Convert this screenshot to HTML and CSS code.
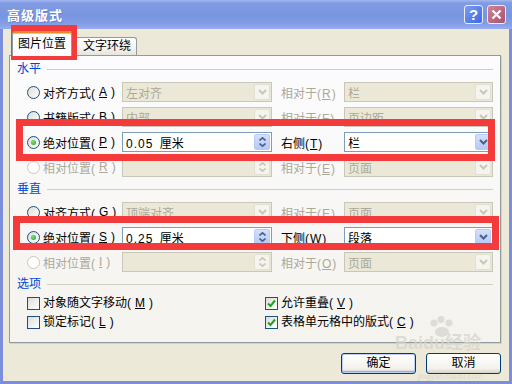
FILE: index.html
```html
<!DOCTYPE html>
<html lang="zh-CN">
<head>
	<meta charset="UTF-8">
	<title>高级版式</title>
	<link rel="stylesheet" href="styles.css">
</head>
<body>
<div class="window">
	<div class="titlebar">
		<span class="title">高级版式</span>
		<span class="tb-btn help">?</span>
		<span class="tb-btn close"><svg width="13" height="13" viewBox="0 0 13 13"><path d="M2.5 2.5L10.5 10.5M10.5 2.5L2.5 10.5" stroke="#fff" stroke-width="2.2"/></svg></span>
	</div>
	<div class="client">
		<div class="tabs">
			<div class="tab current">图片位置</div>
			<div class="tab">文字环绕</div>
		</div>
		<div class="panel">
			<div class="group-head">水平</div>
			<div class="rows">
				<div class="opt"><span class="radio"></span>对齐方式(<u>A</u>)</div>
				<div class="combo off"><span class="val">左对齐</span><span class="drop"><svg width="9" height="6" viewBox="0 0 9 6"><path d="M1 1L4.5 4.5L8 1" fill="none" stroke="currentColor" stroke-width="2"/></svg></span></div>
				<div class="rel off">相对于(<u>R</u>)</div>
				<div class="combo off"><span class="val">栏</span><span class="drop"><svg width="9" height="6" viewBox="0 0 9 6"><path d="M1 1L4.5 4.5L8 1" fill="none" stroke="currentColor" stroke-width="2"/></svg></span></div>

				<div class="opt"><span class="radio"></span>书籍版式(<u>B</u>)</div>
				<div class="combo off"><span class="val">内部</span><span class="drop"><svg width="9" height="6" viewBox="0 0 9 6"><path d="M1 1L4.5 4.5L8 1" fill="none" stroke="currentColor" stroke-width="2"/></svg></span></div>
				<div class="rel off">相对于(<u>F</u>)</div>
				<div class="combo off"><span class="val">页边距</span><span class="drop"><svg width="9" height="6" viewBox="0 0 9 6"><path d="M1 1L4.5 4.5L8 1" fill="none" stroke="currentColor" stroke-width="2"/></svg></span></div>

				<div class="opt"><span class="radio on"></span>绝对位置(<u>P</u>)</div>
				<div class="combo"><span class="val"><span class="num">0.05</span> 厘米</span><span class="spin"><svg width="7" height="4" viewBox="0 0 7 4"><path d="M0.5 3.5L3.5 0.8L6.5 3.5" fill="none" stroke="currentColor" stroke-width="1.6"/></svg><svg width="7" height="4" viewBox="0 0 7 4"><path d="M0.5 0.5L3.5 3.2L6.5 0.5" fill="none" stroke="currentColor" stroke-width="1.6"/></svg></span></div>
				<div class="rel">右侧(<u>T</u>)</div>
				<div class="combo"><span class="val">栏</span><span class="drop"><svg width="9" height="6" viewBox="0 0 9 6"><path d="M1 1L4.5 4.5L8 1" fill="none" stroke="currentColor" stroke-width="2"/></svg></span></div>

				<div class="opt off"><span class="radio"></span>相对位置(<u>R</u>)</div>
				<div class="combo off"><span class="val"></span><span class="spin"><svg width="7" height="4" viewBox="0 0 7 4"><path d="M0.5 3.5L3.5 0.8L6.5 3.5" fill="none" stroke="currentColor" stroke-width="1.6"/></svg><svg width="7" height="4" viewBox="0 0 7 4"><path d="M0.5 0.5L3.5 3.2L6.5 0.5" fill="none" stroke="currentColor" stroke-width="1.6"/></svg></span></div>
				<div class="rel off">相对于(<u>E</u>)</div>
				<div class="combo off"><span class="val">页面</span><span class="drop"><svg width="9" height="6" viewBox="0 0 9 6"><path d="M1 1L4.5 4.5L8 1" fill="none" stroke="currentColor" stroke-width="2"/></svg></span></div>
			</div>

			<div class="group-head">垂直</div>
			<div class="rows">
				<div class="opt"><span class="radio"></span>对齐方式(<u>G</u>)</div>
				<div class="combo off"><span class="val">顶端对齐</span><span class="drop"><svg width="9" height="6" viewBox="0 0 9 6"><path d="M1 1L4.5 4.5L8 1" fill="none" stroke="currentColor" stroke-width="2"/></svg></span></div>
				<div class="rel off">相对于(<u>E</u>)</div>
				<div class="combo off"><span class="val">页面</span><span class="drop"><svg width="9" height="6" viewBox="0 0 9 6"><path d="M1 1L4.5 4.5L8 1" fill="none" stroke="currentColor" stroke-width="2"/></svg></span></div>

				<div class="opt"><span class="radio on"></span>绝对位置(<u>S</u>)</div>
				<div class="combo"><span class="val"><span class="num">0.25</span> 厘米</span><span class="spin"><svg width="7" height="4" viewBox="0 0 7 4"><path d="M0.5 3.5L3.5 0.8L6.5 3.5" fill="none" stroke="currentColor" stroke-width="1.6"/></svg><svg width="7" height="4" viewBox="0 0 7 4"><path d="M0.5 0.5L3.5 3.2L6.5 0.5" fill="none" stroke="currentColor" stroke-width="1.6"/></svg></span></div>
				<div class="rel">下侧(<u>W</u>)</div>
				<div class="combo"><span class="val">段落</span><span class="drop"><svg width="9" height="6" viewBox="0 0 9 6"><path d="M1 1L4.5 4.5L8 1" fill="none" stroke="currentColor" stroke-width="2"/></svg></span></div>

				<div class="opt off"><span class="radio"></span>相对位置(<u>I</u>)</div>
				<div class="combo off"><span class="val"></span><span class="spin"><svg width="7" height="4" viewBox="0 0 7 4"><path d="M0.5 3.5L3.5 0.8L6.5 3.5" fill="none" stroke="currentColor" stroke-width="1.6"/></svg><svg width="7" height="4" viewBox="0 0 7 4"><path d="M0.5 0.5L3.5 3.2L6.5 0.5" fill="none" stroke="currentColor" stroke-width="1.6"/></svg></span></div>
				<div class="rel off">相对于(<u>O</u>)</div>
				<div class="combo off"><span class="val">页面</span><span class="drop"><svg width="9" height="6" viewBox="0 0 9 6"><path d="M1 1L4.5 4.5L8 1" fill="none" stroke="currentColor" stroke-width="2"/></svg></span></div>
			</div>

			<div class="group-head">选项</div>
			<div class="checks">
				<div class="check"><span class="box"></span>对象随文字移动(<u>M</u>)</div>
				<div class="check"><span class="box on"><svg width="9" height="9" viewBox="0 0 9 9"><path d="M1 4.5L3.5 7L8 1.5" fill="none" stroke="#21a121" stroke-width="2"/></svg></span>允许重叠(<u>V</u>)</div>
				<div class="check"><span class="box"></span>锁定标记(<u>L</u>)</div>
				<div class="check"><span class="box on"><svg width="9" height="9" viewBox="0 0 9 9"><path d="M1 4.5L3.5 7L8 1.5" fill="none" stroke="#21a121" stroke-width="2"/></svg></span>表格单元格中的版式(<u>C</u>)</div>
			</div>
		</div>
		<div class="actions">
			<div class="btn default">确定</div>
			<div class="btn">取消</div>
		</div>
	</div>

	<div class="watermark">
		<svg class="paw" width="30" height="22" viewBox="0 0 30 22"><circle cx="7" cy="7" r="3.5"/><circle cx="14" cy="3.5" r="3.5"/><circle cx="22" cy="7" r="3.5"/><ellipse cx="15" cy="16" rx="7" ry="5"/></svg>
		<div class="wm-big">Baidu经验</div>
	</div>
	<div class="wm-small">jingyan.baidu.com</div>

	<div class="mark mark-tab"></div>
	<div class="mark mark-h"></div>
	<div class="mark mark-v"></div>
</div>
</body>
</html>
```
FILE: styles.css
```css
body {
	margin: 0;
	font-size: 12px;
	font-family: "Liberation Sans", "Noto Sans CJK SC", sans-serif;
	color: #000;
}

.window {
	position: relative;
	width: 512px;
	height: 384px;
	background: #7b8ddb;
	display: flex;
	flex-direction: column;
	overflow: hidden;
}

/* title bar */
.titlebar {
	height: 29px;
	display: flex;
	align-items: center;
	padding: 0 6px 0 7px;
	background: linear-gradient(#a3b6f1 0, #819be3 3px, #7a95df 55%, #829ce5 80%, #95acee 100%);
}

.title {
	flex: 1;
	color: #fff;
	font-size: 13px;
	font-weight: bold;
	letter-spacing: 1px;
	text-shadow: 1px 1px 0 #6b80cc;
}

.tb-btn {
	width: 19px;
	height: 19px;
	box-sizing: border-box;
	border: 1px solid #e8eefc;
	border-radius: 3px;
	display: flex;
	align-items: center;
	justify-content: center;
	color: #fff;
	font: bold 15px "Liberation Sans", sans-serif;
}

.help {
	margin-right: 4px;
	background: linear-gradient(135deg, #7c9cf2, #3e68e2);
}

.close {
	background: linear-gradient(135deg, #cf8598, #a5546d);
}

/* client area */
.client {
	flex: 1;
	margin: 0 3px 3px;
	padding: 2px 8px 0 6px;
	background: #ece9d8;
}

.tabs {
	display: flex;
	align-items: flex-end;
	padding-left: 3px;
}

.tab {
	position: relative;
	height: 18px;
	line-height: 17px;
	box-sizing: border-box;
	padding: 0 5px 0 10px;
	border: 1px solid #919b9c;
	border-bottom: 0;
	border-radius: 3px 3px 0 0;
	background: linear-gradient(#fff, #f4f3ef 60%, #e6e4dc);
}

.tab.current {
	z-index: 1;
	height: 25px;
	line-height: 22px;
	margin-bottom: -1px;
	padding: 0 5px;
	border-top: 2px solid #e68b2c;
	background: #fcfcfe;
	box-shadow: inset 0 1px 0 #ffc73c;
}

.panel {
	height: 288px;
	box-sizing: border-box;
	padding-top: 6px;
	border: 1px solid #919b9c;
	background: linear-gradient(#fcfcfe, #f4f3ee);
	box-shadow: 1px 1px 0 #d5d2c4;
}

.group-head {
	display: flex;
	align-items: center;
	height: 14px;
	line-height: 14px;
	margin: 5px 7px 0 0;
	padding-left: 7px;
	color: #0046d5;
}

.group-head:first-child {
	margin-top: 0;
}

.group-head:after {
	content: "";
	flex: 1;
	height: 1px;
	margin-left: 6px;
	background: #d0d0bf;
}

.rows {
	display: grid;
	grid-template-columns: 95px 150px 72px 149px;
	grid-auto-rows: 20px;
	row-gap: 5px;
	align-items: center;
	margin-top: 6px;
	padding-left: 17px;
}

.opt {
	display: flex;
	align-items: center;
	gap: 3px;
	white-space: nowrap;
}

.opt u,
.rel u,
.check u {
	margin: 0 1px;
}

.radio {
	position: relative;
	flex: none;
	width: 13px;
	height: 13px;
	box-sizing: border-box;
	border: 1px solid #1c5180;
	border-radius: 50%;
	background: linear-gradient(135deg, #dcdcd7, #fff);
}

.radio.on:after {
	content: "";
	position: absolute;
	left: 3px;
	top: 3px;
	width: 5px;
	height: 5px;
	border-radius: 50%;
	background: radial-gradient(circle at 40% 35%, #7ee07a, #21a121);
}

.off {
	color: #aca899;
}

.opt.off .radio {
	border-color: #cac8bb;
	background: #fff;
}

.rel {
	padding-left: 9px;
	white-space: nowrap;
}

.combo {
	height: 20px;
	box-sizing: border-box;
	display: flex;
	align-items: center;
	padding-left: 3px;
	border: 1px solid #7f9db9;
	background: #fff;
}

.combo .val {
	flex: 1;
	white-space: nowrap;
}

.num {
	letter-spacing: 1px;
	margin-right: 3px;
}

.drop,
.spin {
	width: 16px;
	height: 16px;
	margin-right: 1px;
	box-sizing: border-box;
	display: flex;
	align-items: center;
	justify-content: center;
	border: 1px solid #b8cbf8;
	border-radius: 2px;
	color: #4d6185;
	background: linear-gradient(#d3e0fd, #b4c8f8);
}

.spin {
	flex-direction: column;
	gap: 2px;
}

.combo.off {
	border-color: #c9c7ba;
	background: #ebe8d7;
}

.combo.off .drop,
.combo.off .spin {
	border-color: #e2e0d5;
	color: #c9c7ba;
	background: #f5f4ef;
}

/* options */
.checks {
	display: grid;
	grid-template-columns: 238px auto;
	grid-auto-rows: 13px;
	row-gap: 6px;
	margin-top: 6px;
	padding-left: 17px;
	line-height: 13px;
}

.check {
	display: flex;
	align-items: center;
	gap: 3px;
	white-space: nowrap;
}

.box {
	flex: none;
	width: 13px;
	height: 13px;
	box-sizing: border-box;
	display: flex;
	align-items: center;
	justify-content: center;
	border: 1px solid #1c5180;
	background: linear-gradient(135deg, #dcdcd7, #fff);
}

.actions {
	display: flex;
	justify-content: flex-end;
	gap: 10px;
	margin-top: 10px;
}

.btn {
	width: 75px;
	height: 21px;
	box-sizing: border-box;
	line-height: 19px;
	text-align: center;
	border: 1px solid #003c74;
	border-radius: 3px;
	background: linear-gradient(#fff, #f3f2ec 75%, #d8d2c6);
}

.btn.default {
	box-shadow: inset 0 0 0 1px #bcd0f6, inset 0 -1px 0 1px #8fadea;
}

/* watermark */
.watermark {
	position: absolute;
	left: 395px;
	top: 316px;
	color: rgba(214, 212, 204, 0.75);
	pointer-events: none;
}

.paw {
	display: block;
	margin-left: 32px;
	fill: rgba(214, 212, 204, 0.75);
}

.wm-big {
	margin-top: -4px;
	font-size: 18px;
	font-weight: bold;
	line-height: 18px;
}

.wm-small {
	position: absolute;
	left: 418px;
	top: 373px;
	color: rgba(214, 212, 204, 0.8);
	font-size: 8px;
	line-height: 8px;
	pointer-events: none;
}

/* red annotation boxes */
.mark {
	position: absolute;
	box-sizing: border-box;
	border: 7px solid #f33b3b;
}

.mark-tab {
	left: 11px;
	top: 25px;
	width: 66px;
	height: 35px;
	border-width: 6px;
}

.mark-h {
	left: 16px;
	top: 119px;
	width: 479px;
	height: 42px;
}

.mark-v {
	left: 13px;
	top: 216px;
	width: 486px;
	height: 34px;
}
```
